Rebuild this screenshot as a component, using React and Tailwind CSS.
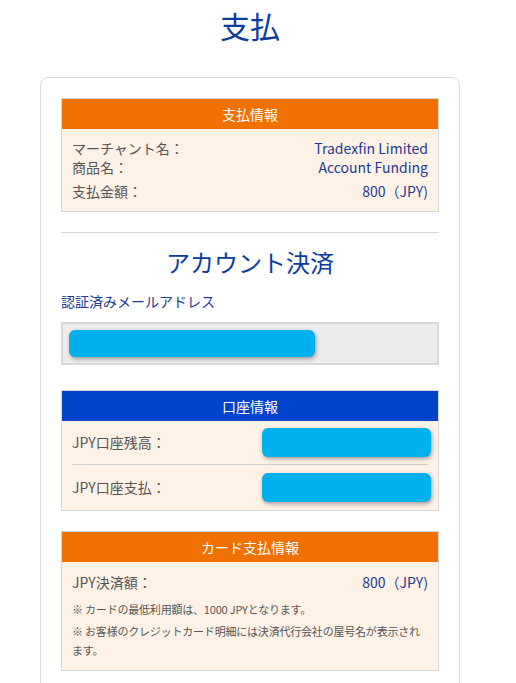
export default function App() {
  const font = { fontFamily: '"Noto Sans CJK JP", "Noto Sans", sans-serif' };
  return (
    <div className="w-[500px] bg-white pb-10" style={font}>
      <h1 className="pt-[4px] text-center text-[30px] leading-[42px] text-[#0b3c9e]">支払</h1>

      <div className="mx-[40px] mt-[31px] rounded-[8px] border border-[#dddddd] px-[20px] pt-[20px] pb-[20px]">
        {/* 支払情報 */}
        <div className="border border-[#d6d6d6]">
          <div className="bg-[#f07000] py-[5px] text-center text-[14px] leading-[20px] text-white">支払情報</div>
          <div className="bg-[#fef2e6] px-[10px] pt-[10px] pb-[10px] text-[14px] text-[#555555]">
            <div className="flex justify-between leading-[19px]">
              <span>マーチャント名：</span>
              <span className="text-[#1d3a94]">Tradexfin Limited</span>
            </div>
            <div className="flex justify-between leading-[19px]">
              <span>商品名：</span>
              <span className="text-[#1d3a94]">Account Funding</span>
            </div>
            <div className="mt-[5px] flex justify-between leading-[19px]">
              <span>支払金額：</span>
              <span className="text-[#1d3a94]">800（JPY)</span>
            </div>
          </div>
        </div>

        <div className="mt-[20px] border-t border-[#d8d8d8]" />

        <h2 className="mt-[12px] text-center text-[24px] leading-[34px] text-[#0b3c9e]">アカウント決済</h2>
        <div className="mt-[12px] text-[14px] leading-[20px] text-[#1d3a94]">認証済みメールアドレス</div>
        <div className="mt-[11px] h-[43px] border-2 border-[#d8d8d8] bg-[#ececec] px-[6px] pt-[6px]">
          <div className="h-[27px] w-[246px] rounded-[6px] bg-[#00b1ee] shadow-[1px_2px_4px_rgba(0,0,0,0.35)]" />
        </div>

        {/* 口座情報 */}
        <div className="mt-[25px] border border-[#d6d6d6]">
          <div className="bg-[#0044cc] py-[5px] text-center text-[14px] leading-[20px] text-white">口座情報</div>
          <div className="bg-[#fef2e6] px-[10px] text-[14px] text-[#555555]">
            <div className="flex h-[44px] items-center justify-between border-b border-[#cccccc]">
              <span>JPY口座残高：</span>
              <div className="mr-[-3px] h-[29px] w-[169px] rounded-[6px] bg-[#00b1ee] shadow-[1px_2px_4px_rgba(0,0,0,0.35)]" />
            </div>
            <div className="flex h-[45px] items-center justify-between">
              <span>JPY口座支払：</span>
              <div className="mr-[-3px] h-[29px] w-[169px] rounded-[6px] bg-[#00b1ee] shadow-[1px_2px_4px_rgba(0,0,0,0.35)]" />
            </div>
          </div>
        </div>

        {/* カード支払情報 */}
        <div className="mt-[20px] border border-[#d6d6d6]">
          <div className="bg-[#f07000] py-[5px] text-center text-[14px] leading-[20px] text-white">カード支払情報</div>
          <div className="bg-[#fef2e6] px-[10px] pt-[10px] pb-[10px] text-[#555555]">
            <div className="flex justify-between text-[14px] leading-[20px]">
              <span>JPY決済額：</span>
              <span className="text-[#1d3a94]">800（JPY)</span>
            </div>
            <div className="mt-[8px] text-[11px] leading-[19px] tracking-[-0.2px]">
              <p className="mb-[3px]">※ カードの最低利用額は、1000 JPYとなります。</p>
              <p>※ お客様のクレジットカード明細には決済代行会社の屋号名が表示されます。</p>
            </div>
          </div>
        </div>
      </div>
    </div>
  );
}
